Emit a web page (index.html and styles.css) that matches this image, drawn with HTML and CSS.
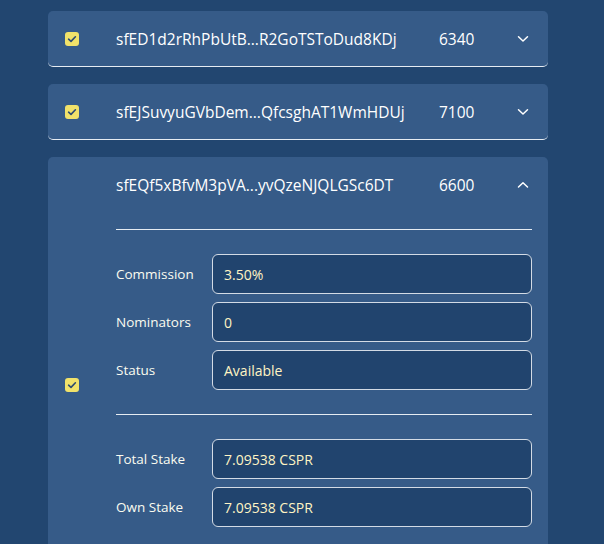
FILE: index.html
```html
<!DOCTYPE html>
<html>
<head>
<meta charset="utf-8">
<link rel="stylesheet" href="styles.css">
</head>
<body>
<div class="list">
  <div class="card collapsed">
    <span class="check"><svg viewBox="0 0 14 14" width="14" height="14"><path d="M3.6 7.2 L6 9.4 L10.4 4.8" fill="none" stroke="#2d4b70" stroke-width="1.6" stroke-linecap="round" stroke-linejoin="round"/></svg></span>
    <div class="body">
      <div class="head">
        <span class="hash">sfED1d2rRhPbUtB...R2GoTSToDud8KDj</span>
        <span class="num">6340</span>
        <span class="chev"><svg viewBox="0 0 12 8" width="12" height="8"><path d="M1.5 1.8 L6 6 L10.5 1.8" fill="none" stroke="#fff" stroke-width="1.5" stroke-linecap="round" stroke-linejoin="round"/></svg></span>
      </div>
    </div>
  </div>
  <div class="card collapsed">
    <span class="check"><svg viewBox="0 0 14 14" width="14" height="14"><path d="M3.6 7.2 L6 9.4 L10.4 4.8" fill="none" stroke="#2d4b70" stroke-width="1.6" stroke-linecap="round" stroke-linejoin="round"/></svg></span>
    <div class="body">
      <div class="head">
        <span class="hash">sfEJSuvyuGVbDem...QfcsghAT1WmHDUj</span>
        <span class="num">7100</span>
        <span class="chev"><svg viewBox="0 0 12 8" width="12" height="8"><path d="M1.5 1.8 L6 6 L10.5 1.8" fill="none" stroke="#fff" stroke-width="1.5" stroke-linecap="round" stroke-linejoin="round"/></svg></span>
      </div>
    </div>
  </div>
  <div class="card expanded">
    <span class="check"><svg viewBox="0 0 14 14" width="14" height="14"><path d="M3.6 7.2 L6 9.4 L10.4 4.8" fill="none" stroke="#2d4b70" stroke-width="1.6" stroke-linecap="round" stroke-linejoin="round"/></svg></span>
    <div class="body">
      <div class="head">
        <span class="hash">sfEQf5xBfvM3pVA...yvQzeNJQLGSc6DT</span>
        <span class="num">6600</span>
        <span class="chev"><svg viewBox="0 0 12 8" width="12" height="8"><path d="M1.5 6 L6 1.8 L10.5 6" fill="none" stroke="#fff" stroke-width="1.5" stroke-linecap="round" stroke-linejoin="round"/></svg></span>
      </div>
      <hr class="sep">
      <div class="fields">
        <div class="field"><span class="label">Commission</span><span class="value">3.50%</span></div>
        <div class="field"><span class="label">Nominators</span><span class="value">0</span></div>
        <div class="field"><span class="label">Status</span><span class="value">Available</span></div>
      </div>
      <hr class="sep">
      <div class="fields">
        <div class="field"><span class="label">Total Stake</span><span class="value">7.09538 CSPR</span></div>
        <div class="field"><span class="label">Own Stake</span><span class="value">7.09538 CSPR</span></div>
      </div>
    </div>
  </div>
</div>
</body>
</html>
```
FILE: styles.css
```css
html, body {
  margin: 0;
  padding: 0;
  background: #224670;
  height: 100%;
  overflow: hidden;
}
body {
  font-family: "Open Sans", "Noto Sans", sans-serif;
  color: #ffffff;
  font-size: 14px;
}
.list {
  width: 500px;
  margin: 11px 0 0 48px;
  display: flex;
  flex-direction: column;
  gap: 17px;
}
.card {
  background: #365b88;
  border-radius: 5px;
  display: flex;
  align-items: center;
  padding: 0 16px 0 17px;
}
.card.collapsed {
  border-bottom: 1px solid #e6ecf2;
}
.check {
  width: 14px;
  height: 14px;
  flex: none;
  background: #f1e26a;
  border-radius: 3px;
  margin-right: 37px;
  display: flex;
}
.body {
  flex: 1;
  min-width: 0;
}
.expanded .body {
  padding-bottom: 86px;
}
.head {
  height: 56px;
  display: flex;
  align-items: center;
}
.collapsed .head {
  height: 55px;
}
.hash {
  width: 323px;
  font-size: 15.5px;
}
.num {
  font-size: 15.5px;
  flex: 1;
}
.chev {
  width: 12px;
  height: 8px;
  margin-right: 3px;
  display: flex;
}
.sep {
  margin: 16px 0 0;
  border: 0;
  border-top: 1px solid #e6ecf2;
  height: 0;
}
.fields {
  margin-top: 24px;
  display: flex;
  flex-direction: column;
  gap: 8px;
}
.fields + .sep {
  margin-top: 24px;
}
.field {
  display: flex;
  align-items: center;
}
.label {
  width: 96px;
  flex: none;
  font-size: 13.5px;
  color: #fbfbf0;
}
.value {
  flex: 1;
  height: 40px;
  box-sizing: border-box;
  border: 1px solid #d3dbe5;
  border-radius: 6px;
  background: #21446e;
  display: flex;
  align-items: center;
  padding-left: 11px;
  font-size: 14px;
  color: #fff4c4;
}
```
